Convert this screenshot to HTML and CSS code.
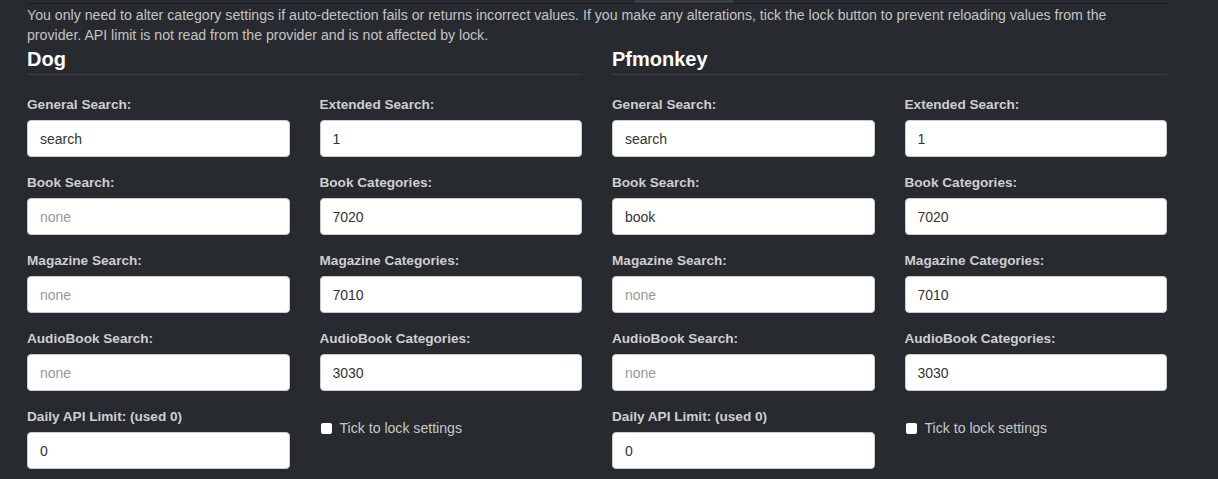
FILE: index.html
```html
<!DOCTYPE html>
<html>
<head>
<meta charset="utf-8">
<link rel="stylesheet" href="styles.css">
</head>
<body>
<div class="page">
  <div class="tabline"><div class="tab"></div></div>
  <p class="intro">You only need to alter category settings if auto-detection fails or returns incorrect values. If you make any alterations, tick the lock button to prevent reloading values from the provider. API limit is not read from the provider and is not affected by lock.</p>
  <div class="providers">
    <section class="provider">
      <h3 class="title">Dog</h3>
      <div class="fields">
        <div class="group"><label>General Search:</label><input class="field" value="search"></div>
        <div class="group"><label>Extended Search:</label><input class="field" value="1"></div>
        <div class="group"><label>Book Search:</label><input class="field" placeholder="none"></div>
        <div class="group"><label>Book Categories:</label><input class="field" value="7020"></div>
        <div class="group"><label>Magazine Search:</label><input class="field" placeholder="none"></div>
        <div class="group"><label>Magazine Categories:</label><input class="field" value="7010"></div>
        <div class="group"><label>AudioBook Search:</label><input class="field" placeholder="none"></div>
        <div class="group"><label>AudioBook Categories:</label><input class="field" value="3030"></div>
        <div class="group"><label>Daily API Limit: (used 0)</label><input class="field" value="0"></div>
        <div class="group check"><span class="box"></span><span class="checktext">Tick to lock settings</span></div>
      </div>
    </section>
    <section class="provider">
      <h3 class="title">Pfmonkey</h3>
      <div class="fields">
        <div class="group"><label>General Search:</label><input class="field" value="search"></div>
        <div class="group"><label>Extended Search:</label><input class="field" value="1"></div>
        <div class="group"><label>Book Search:</label><input class="field" value="book"></div>
        <div class="group"><label>Book Categories:</label><input class="field" value="7020"></div>
        <div class="group"><label>Magazine Search:</label><input class="field" placeholder="none"></div>
        <div class="group"><label>Magazine Categories:</label><input class="field" value="7010"></div>
        <div class="group"><label>AudioBook Search:</label><input class="field" placeholder="none"></div>
        <div class="group"><label>AudioBook Categories:</label><input class="field" value="3030"></div>
        <div class="group"><label>Daily API Limit: (used 0)</label><input class="field" value="0"></div>
        <div class="group check"><span class="box"></span><span class="checktext">Tick to lock settings</span></div>
      </div>
    </section>
  </div>
</div>
</body>
</html>
```
FILE: styles.css
```css
html, body {
  margin: 0;
  padding: 0;
  background: #272a2f;
  font-family: "Liberation Sans", Arial, sans-serif;
  color: #c6c6c6;
}
.page {
  width: 1140px;
  padding-left: 27px;
}
.tabline {
  height: 3px;
  border-bottom: 1px solid #1c1e22;
  display: flex;
  padding-left: 608px;
}
.tab {
  width: 98px;
  height: 3px;
  background: #3a3d43;
}
.intro {
  margin: 1px 0 0;
  font-size: 14.15px;
  line-height: 20px;
  color: #c4c4c4;
  padding-right: 40px;
}
.providers {
  display: grid;
  grid-template-columns: 1fr 1fr;
  column-gap: 30px;
}
.title {
  margin: 3px 0 0;
  font-size: 20px;
  line-height: 22px;
  font-weight: bold;
  color: #ffffff;
  padding-bottom: 4px;
  border-bottom: 1px solid #3a3d43;
}
.fields {
  display: grid;
  grid-template-columns: 1fr 1fr;
  column-gap: 30px;
  padding-top: 21px;
}
.group {
  margin-bottom: 17px;
}
.group label {
  display: block;
  font-size: 13.6px;
  line-height: 18px;
  font-weight: bold;
  color: #cfcfcf;
  margin-bottom: 6px;
}
.field {
  display: block;
  box-sizing: border-box;
  width: 100%;
  height: 37px;
  padding: 6px 12px;
  border: 1px solid #cccccc;
  border-radius: 4px;
  background: #ffffff;
  font-family: "Liberation Sans", Arial, sans-serif;
  font-size: 14px;
  color: #333333;
  outline: none;
}
.field::placeholder {
  color: #999999;
}
.check {
  display: flex;
  align-items: center;
  margin-top: 11px;
  height: 18px;
}
.box {
  width: 11px;
  height: 11px;
  background: #ffffff;
  border-radius: 2px;
  margin-left: 1px;
  margin-right: 8px;
}
.checktext {
  font-size: 14.1px;
  color: #c8c8c8;
}
```
